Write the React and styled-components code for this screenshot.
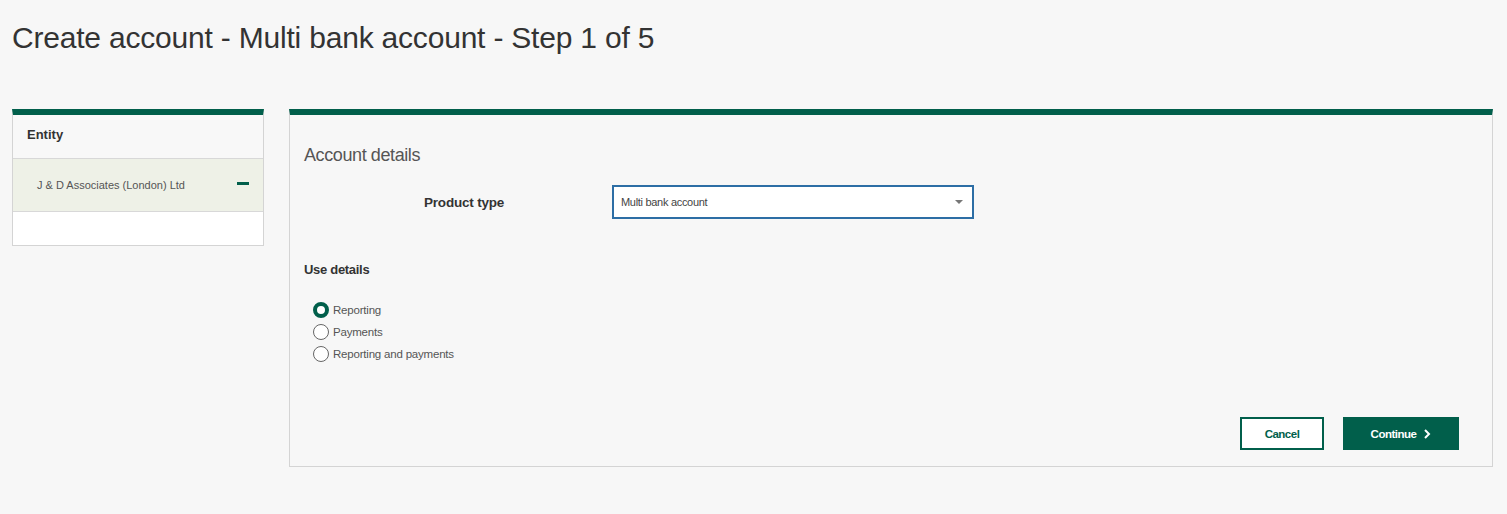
import React, { useState } from 'react';
import styled, { createGlobalStyle } from 'styled-components';

const green = '#015f4b';

const GlobalStyle = createGlobalStyle`
  body {
    margin: 0;
    background: #f7f7f7;
    font-family: 'Liberation Sans', Arial, sans-serif;
    color: #333;
  }
`;

const Page = styled.div`
  padding: 18px 14px 0 12px;
`;

const Title = styled.h1`
  margin: 0;
  font-size: 30px;
  font-weight: 400;
  letter-spacing: -0.2px;
  color: #333;
  line-height: 40px;
`;

const Columns = styled.div`
  display: flex;
  align-items: flex-start;
  gap: 25px;
  margin-top: 51px;
`;

const Sidebar = styled.div`
  width: 252px;
  box-sizing: border-box;
  border: 1px solid #d4d4d4;
  border-top: 6px solid ${green};
`;

const SideHeader = styled.div`
  height: 44px;
  box-sizing: border-box;
  padding: 0 14px 5px;
  display: flex;
  align-items: center;
  font-size: 13px;
  font-weight: bold;
  color: #333;
  background: #f8f8f8;
  border-bottom: 1px solid #d8d8d8;
`;

const EntityRow = styled.div`
  height: 52px;
  padding: 0 14px 0 24px;
  display: flex;
  align-items: center;
  justify-content: space-between;
  font-size: 11px;
  color: #555;
  background: ${(p) => (p.active ? '#eef1e7' : '#fff')};
  border-bottom: 1px solid #d8d8d8;
`;

const EmptyRow = styled.div`
  height: 33px;
  background: #fff;
`;

const Minus = styled.span`
  width: 12px;
  height: 3px;
  background: ${green};
  margin-top: -4px;
`;

const Main = styled.div`
  flex: 1;
  height: 358px;
  box-sizing: border-box;
  border: 1px solid #d4d4d4;
  border-top: 6px solid ${green};
  padding: 28px 14px 16px 14px;
  display: flex;
  flex-direction: column;
`;

const SectionTitle = styled.h2`
  margin: 0;
  font-size: 18px;
  font-weight: 400;
  color: #555;
  letter-spacing: -0.4px;
  line-height: 24px;
`;

const FieldRow = styled.div`
  display: grid;
  grid-template-columns: 308px 362px;
  align-items: center;
  margin-top: 18px;
`;

const FieldLabel = styled.label`
  font-size: 13.5px;
  font-weight: bold;
  color: #333;
  padding-left: 120px;
  letter-spacing: -0.2px;
`;

const Select = styled.div`
  height: 34px;
  box-sizing: border-box;
  border: 2px solid #2d6ea5;
  background: #fff;
  display: flex;
  align-items: center;
  justify-content: space-between;
  padding: 0 9px 0 7px;
  font-size: 11px;
  color: #444;
  letter-spacing: -0.3px;
`;

const Caret = styled.span`
  width: 0;
  height: 0;
  border-left: 4px solid transparent;
  border-right: 4px solid transparent;
  border-top: 4px solid #777;
`;

const SubTitle = styled.div`
  margin-top: 43px;
  font-size: 13px;
  font-weight: bold;
  color: #333;
  letter-spacing: -0.3px;
`;

const RadioList = styled.div`
  margin-top: 24px;
  display: flex;
  flex-direction: column;
  gap: 5px;
  padding-left: 9px;
`;

const RadioItem = styled.label`
  display: flex;
  align-items: center;
  gap: 4px;
  font-size: 11.5px;
  color: #555;
  letter-spacing: -0.2px;
  height: 17px;
  cursor: pointer;
`;

const RadioDot = styled.span`
  width: 16px;
  height: 16px;
  box-sizing: border-box;
  border-radius: 50%;
  background: #fff;
  border: ${(p) => (p.checked ? `4px solid ${green}` : '1px solid #666')};
`;

const Actions = styled.div`
  margin-top: auto;
  display: flex;
  justify-content: flex-end;
  gap: 19px;
  padding-right: 19px;
`;

const Button = styled.button`
  height: 33px;
  box-sizing: border-box;
  border: 2px solid ${green};
  background: ${(p) => (p.primary ? green : '#fff')};
  color: ${(p) => (p.primary ? '#fff' : green)};
  font-family: 'Liberation Sans', Arial, sans-serif;
  font-size: 11.5px;
  font-weight: bold;
  letter-spacing: -0.5px;
  width: ${(p) => (p.primary ? '116px' : '84px')};
  display: flex;
  align-items: center;
  justify-content: center;
  gap: 7px;
  cursor: pointer;
`;

const options = ['Reporting', 'Payments', 'Reporting and payments'];

export default function App() {
  const [use, setUse] = useState('Reporting');

  return (
    <>
      <GlobalStyle />
      <Page>
        <Title>Create account - Multi bank account - Step 1 of 5</Title>
        <Columns>
          <Sidebar>
            <SideHeader>Entity</SideHeader>
            <EntityRow active>
              J &amp; D Associates (London) Ltd
              <Minus />
            </EntityRow>
            <EmptyRow />
          </Sidebar>
          <Main>
            <SectionTitle>Account details</SectionTitle>
            <FieldRow>
              <FieldLabel>Product type</FieldLabel>
              <Select>
                Multi bank account
                <Caret />
              </Select>
            </FieldRow>
            <SubTitle>Use details</SubTitle>
            <RadioList>
              {options.map((o) => (
                <RadioItem key={o} onClick={() => setUse(o)}>
                  <RadioDot checked={use === o} />
                  {o}
                </RadioItem>
              ))}
            </RadioList>
            <Actions>
              <Button>Cancel</Button>
              <Button primary>
                Continue
                <svg width="8" height="10" viewBox="0 0 8 10">
                  <path d="M2 1 L6 5 L2 9" fill="none" stroke="#fff" strokeWidth="2" />
                </svg>
              </Button>
            </Actions>
          </Main>
        </Columns>
      </Page>
    </>
  );
}
